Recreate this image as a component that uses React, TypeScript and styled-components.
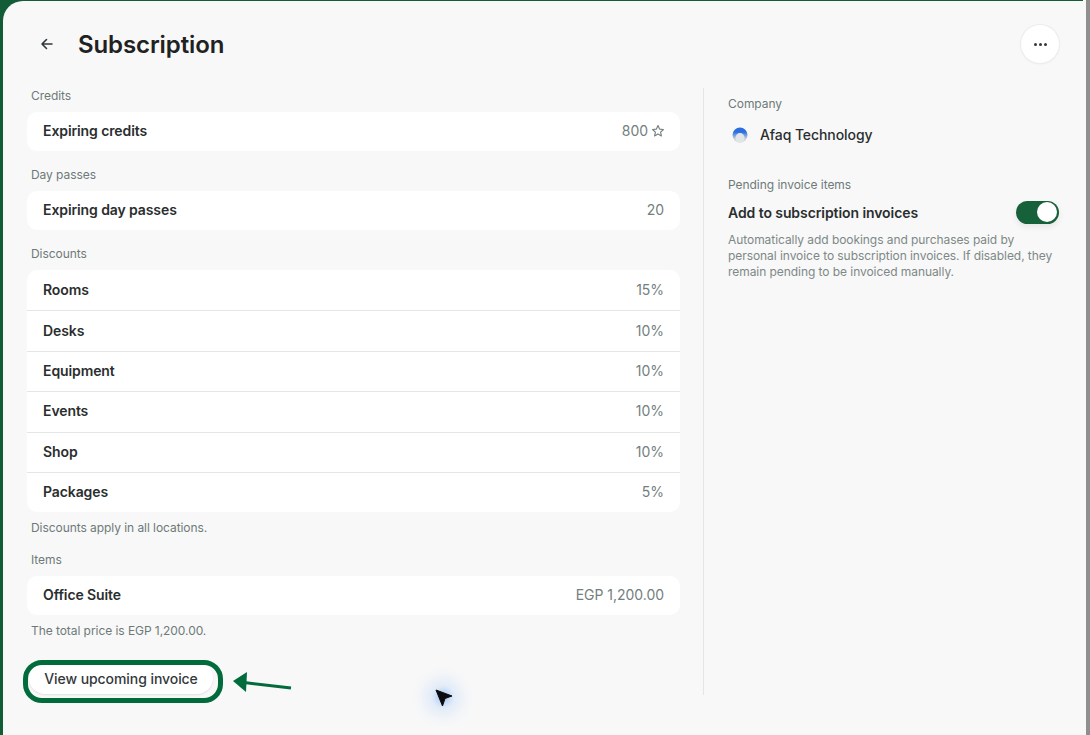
import React from "react";
import styled, { createGlobalStyle } from "styled-components";

const Global = createGlobalStyle`
  html, body { margin: 0; padding: 0; width: 1090px; height: 735px; overflow: hidden; background: #8f8f8f; }
  * { box-sizing: border-box; }
  #root { width: 1090px; height: 735px; }
`;

const Frame = styled.div`
  position: relative;
  width: 1090px;
  height: 735px;
  overflow: hidden;
  background: linear-gradient(90deg, #125c37 0, #125c37 1083px, #f8f8f8 1083px, #f8f8f8 1086px, #8f8f8f 1086px);
  font-family: Inter, "Liberation Sans", sans-serif;
  color: #1f2222;
`;

const Sheet = styled.div`
  width: 1083px;
  height: 734px;
  margin-top: 1px;
  margin-left: 3px;
  border-top-left-radius: 20px;
  background: #f8f8f8;
  display: flex;
  flex-direction: column;
`;

const Header = styled.header`
  height: 87px;
  flex: none;
  display: flex;
  align-items: center;
  padding: 0 24px 0 36px;
`;

const BackIcon = styled.svg`
  width: 16px;
  height: 16px;
  flex: none;
  margin-top: -1px;
  fill: none;
  stroke: #33383a;
  stroke-width: 1.6;
  stroke-linecap: round;
  stroke-linejoin: round;
`;

const Title = styled.h1`
  margin: 1px 0 0 23px;
  font-size: 24px;
  line-height: 32px;
  font-weight: 600;
  letter-spacing: -0.1px;
  color: #1f2222;
  flex: 1;
`;

const MenuButton = styled.button`
  width: 38px;
  height: 38px;
  border-radius: 50%;
  border: 0;
  padding: 0;
  background: #fff;
  box-shadow: 0 0 0 1px #ececec, 0 1px 3px rgba(0, 0, 0, 0.06);
  display: flex;
  align-items: center;
  justify-content: center;
  gap: 2px;
  margin: -1px 3px 0 0;
`;

const Dot = styled.span`
  width: 3px;
  height: 3px;
  border-radius: 50%;
  background: #33383a;
`;

const Body = styled.div`
  display: flex;
  align-items: flex-start;
  padding-left: 24px;
`;

const LeftColumn = styled.main`
  width: 653px;
  flex: none;
`;

const Section = styled.section`
  margin-bottom: 16px;
`;

const Label = styled.div`
  font-size: 12px;
  line-height: 16px;
  letter-spacing: -0.06px;
  color: #6e7a78;
  padding-left: 4px;
  margin-bottom: 8px;
`;

const Card = styled.div`
  background: #fff;
  border-radius: 10px;
  overflow: hidden;
`;

const Row = styled.div`
  height: ${(p) => (p.$tall ? "40.4px" : "39px")};
  display: flex;
  align-items: center;
  justify-content: space-between;
  padding: 0 16px;
  & + & {
    border-top: 1px solid #e4e6e6;
  }
`;

const RowName = styled.span`
  font-size: 14px;
  line-height: 18px;
  font-weight: 600;
  letter-spacing: -0.1px;
  color: #2a2e2e;
  margin-top: -1px;
`;

const RowValue = styled.span`
  font-size: 14px;
  line-height: 18px;
  letter-spacing: -0.03px;
  color: #73807e;
  display: flex;
  align-items: center;
  gap: 4px;
  margin-top: -1px;
`;

const StarIcon = styled.svg`
  width: 12px;
  height: 12px;
  fill: none;
  stroke: #73807e;
  stroke-width: 1;
  stroke-linejoin: round;
`;

const Note = styled.div`
  font-size: 12px;
  line-height: 16px;
  letter-spacing: -0.06px;
  color: #6e7a78;
  padding-left: 4px;
  margin-top: 8px;
`;

const UpcomingButton = styled.button`
  display: block;
  margin: 23px 0 0 2px;
  width: 184px;
  height: 32px;
  border: 0;
  border-radius: 16px;
  background: #fff;
  box-shadow: 0 1px 2px rgba(0, 0, 0, 0.1);
  font-family: inherit;
  font-size: 14px;
  font-weight: 500;
  letter-spacing: -0.07px;
  color: #33383a;
  padding: 0;
`;

const RightColumn = styled.aside`
  width: 357px;
  height: 607px;
  margin-left: 23px;
  border-left: 1px solid #e4e6e6;
  padding: 7px 0 0 24px;
  flex: none;
`;

const SideLabel = styled.div`
  font-size: 12px;
  line-height: 18px;
  letter-spacing: -0.04px;
  color: #6e7a78;
`;

const Company = styled.div`
  display: flex;
  align-items: center;
  gap: 12px;
  margin: 10px 0 30px 4px;
  height: 23px;
  font-size: 14px;
  font-weight: 500;
  letter-spacing: -0.08px;
  color: #2a2e2e;
`;

const CompanyLogo = styled.svg`
  width: 16px;
  height: 16px;
  flex: none;
`;

const ToggleRow = styled.div`
  display: flex;
  align-items: center;
  justify-content: space-between;
  width: 331px;
  height: 24px;
  margin-top: 6px;
`;

const ToggleLabel = styled.span`
  font-size: 14px;
  font-weight: 600;
  letter-spacing: -0.08px;
  color: #2a2e2e;
`;

const Toggle = styled.div`
  width: 43px;
  height: 23px;
  border-radius: 12px;
  background: #16603a;
  padding: 1.5px 2px;
  display: flex;
  justify-content: flex-end;
  box-shadow: 0 3px 6px rgba(0, 0, 0, 0.08);
`;

const Knob = styled.span`
  width: 20px;
  height: 20px;
  border-radius: 50%;
  background: #fff;
`;

const Description = styled.p`
  margin: 8px 0 0;
  width: 331px;
  font-size: 12px;
  line-height: 16px;
  letter-spacing: -0.06px;
  color: #7d8887;
`;

const Highlight = styled.div`
  position: absolute;
  left: 23px;
  top: 660px;
  width: 200px;
  height: 43px;
  border: 5px solid #016b3c;
  border-radius: 19px;
  pointer-events: none;
`;

const Arrow = styled.svg`
  position: absolute;
  left: 230px;
  top: 668px;
  width: 64px;
  height: 28px;
`;

const CursorWrap = styled.svg`
  position: absolute;
  left: 403px;
  top: 658px;
  width: 80px;
  height: 77px;
`;

const discounts = [
  ["Rooms", "15%"],
  ["Desks", "10%"],
  ["Equipment", "10%"],
  ["Events", "10%"],
  ["Shop", "10%"],
  ["Packages", "5%"],
];

export default function App() {
  return (
    <Frame>
      <Global />
      <Sheet>
        <Header>
          <BackIcon viewBox="0 0 16 16">
            <path d="M13 8H3M7.5 3.5 3 8l4.5 4.5" />
          </BackIcon>
          <Title>Subscription</Title>
          <MenuButton aria-label="More">
            <Dot />
            <Dot />
            <Dot />
          </MenuButton>
        </Header>
        <Body>
          <LeftColumn>
            <Section>
              <Label>Credits</Label>
              <Card>
                <Row>
                  <RowName>Expiring credits</RowName>
                  <RowValue>
                    800
                    <StarIcon viewBox="0.7 0.7 10.6 10.6">
                      <path d="M6 1.2 7.4 4.3l3.4.4-2.5 2.3.7 3.4L6 8.7l-3 1.7.7-3.4L1.2 4.7l3.4-.4z" />
                    </StarIcon>
                  </RowValue>
                </Row>
              </Card>
            </Section>
            <Section>
              <Label>Day passes</Label>
              <Card>
                <Row>
                  <RowName>Expiring day passes</RowName>
                  <RowValue>20</RowValue>
                </Row>
              </Card>
            </Section>
            <Section>
              <Label>Discounts</Label>
              <Card>
                {discounts.map(([name, value]) => (
                  <Row key={name} $tall>
                    <RowName>{name}</RowName>
                    <RowValue>{value}</RowValue>
                  </Row>
                ))}
              </Card>
              <Note>Discounts apply in all locations.</Note>
            </Section>
            <Section>
              <Label>Items</Label>
              <Card>
                <Row>
                  <RowName>Office Suite</RowName>
                  <RowValue>EGP 1,200.00</RowValue>
                </Row>
              </Card>
              <Note>The total price is EGP 1,200.00.</Note>
              <UpcomingButton>View upcoming invoice</UpcomingButton>
            </Section>
          </LeftColumn>
          <RightColumn>
            <SideLabel>Company</SideLabel>
            <Company>
              <CompanyLogo viewBox="0 0 16 16">
                <defs>
                  <linearGradient id="logoFade" x1="0" y1="0" x2="0" y2="1">
                    <stop offset="0.3" stopColor="#2a6ee0" />
                    <stop offset="0.75" stopColor="#ccd2d8" />
                  </linearGradient>
                </defs>
                <circle cx="8" cy="8" r="7.5" fill="url(#logoFade)" />
                <ellipse cx="8" cy="11" rx="4.5" ry="5" fill="#e2e5e8" />
              </CompanyLogo>
              Afaq Technology
            </Company>
            <SideLabel>Pending invoice items</SideLabel>
            <ToggleRow>
              <ToggleLabel>Add to subscription invoices</ToggleLabel>
              <Toggle>
                <Knob />
              </Toggle>
            </ToggleRow>
            <Description>
              Automatically add bookings and purchases paid by personal invoice to
              subscription invoices. If disabled, they remain pending to be invoiced
              manually.
            </Description>
          </RightColumn>
        </Body>
      </Sheet>
      <Highlight />
      <Arrow viewBox="0 0 64 28">
        <path d="M61 20 14 14.5" stroke="#016b3c" strokeWidth="3" fill="none" />
        <path d="M3 13 17 4l-1 20z" fill="#016b3c" />
      </Arrow>
      <CursorWrap viewBox="0 0 80 77">
        <defs>
          <radialGradient id="glow">
            <stop offset="0" stopColor="#6aa5f5" stopOpacity="0.7" />
            <stop offset="0.35" stopColor="#a9cbf8" stopOpacity="0.28" />
            <stop offset="1" stopColor="#dfeafa" stopOpacity="0" />
          </radialGradient>
        </defs>
        <circle cx="40" cy="39" r="32" fill="url(#glow)" />
        <path d="M33 32 49 38l-7 2.5-2.5 7.5z" fill="#0c0c0e" stroke="#0c0c0e" strokeLinejoin="round" />
      </CursorWrap>
    </Frame>
  );
}
